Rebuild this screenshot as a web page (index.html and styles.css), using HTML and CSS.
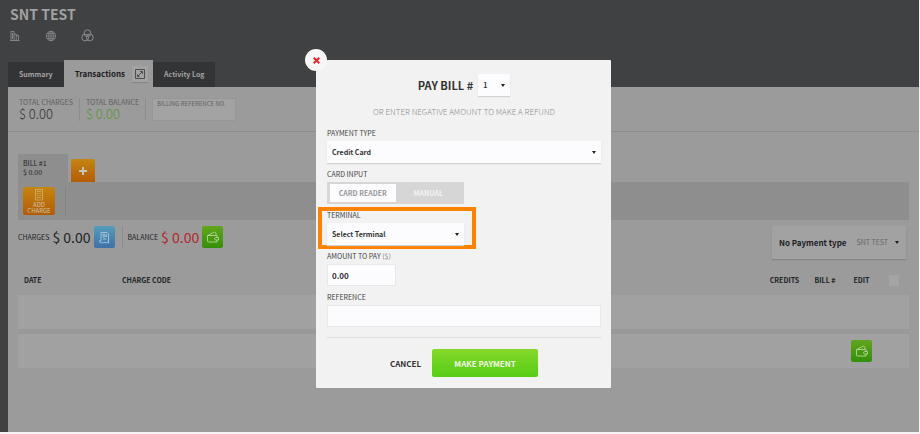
FILE: index.html
```html
<!DOCTYPE html>
<html lang="en">
<head>
    <meta charset="UTF-8">
    <meta name="viewport" content="width=device-width, initial-scale=1.0">
    <title>SNT TEST - Pay Bill</title>
    <link rel="stylesheet" href="styles.css">
</head>
<body>

<svg width="0" height="0" class="sprite">
    <symbol id="icon-wallet" viewBox="0 0 14 14">
        <path d="M1.500 5.500h9.500v2M11 10v2H2.500q-1 0-1-1V5.500L8.500 2l1.500 1.200v2.300M12.500 7.500H9.800a1.250 1.250 0 0 0 0 2.500h2.700z" fill="none" stroke="currentColor"/>
    </symbol>
</svg>

<div class="app">
    <header class="header">
        <h1>SNT TEST</h1>
        <nav class="header-icons">
            <a href="#" aria-label="Property">
                <svg width="11" height="12" viewBox="0 0 11 12" fill="none" stroke="currentColor" stroke-width=".9">
                    <path d="M0 10.500h9.500M1 10V1.500h3V10M4 4h2.200v6M6.200 5.500h2.300V10M2.500 3v6"/>
                </svg>
            </a>
            <a href="#" aria-label="Language">
                <svg width="12" height="12" viewBox="0 0 12 12" fill="none" stroke="currentColor" stroke-width=".8">
                    <circle cx="6" cy="6" r="4.700"/>
                    <ellipse cx="6" cy="6" rx="2.200" ry="4.700"/>
                    <path d="M6 1.300v9.400M1.300 6h9.400M2 3.600h8M2 8.400h8"/>
                </svg>
            </a>
            <a href="#" aria-label="Groups">
                <svg width="13" height="13" viewBox="0 0 13 13" fill="none" stroke="currentColor">
                    <circle cx="6.500" cy="4.200" r="3.400"/>
                    <circle cx="4.200" cy="8.500" r="3.400"/>
                    <circle cx="8.800" cy="8.500" r="3.400"/>
                </svg>
            </a>
        </nav>
    </header>

    <nav class="tabs">
        <a href="#" class="tab">Summary</a>
        <a href="#" class="tab active">Transactions
            <span class="expand">
                <svg width="10" height="10" viewBox="0 0 10 10" fill="none" stroke="currentColor">
                    <path d="M.5.500h9v9h-9zM2.500 7.500l5-5M5 2.500h2.500V5M2.500 5.500v2h2" stroke-width=".9"/>
                </svg>
            </span>
        </a>
        <a href="#" class="tab">Activity Log</a>
    </nav>

    <main class="panel">
        <section class="totals">
            <div class="total">
                <span class="total-label">TOTAL CHARGES</span>
                <span class="total-value">$ 0.00</span>
            </div>
            <div class="total green">
                <span class="total-label">TOTAL BALANCE</span>
                <span class="total-value">$ 0.00</span>
            </div>
            <input class="billing-ref" type="text" placeholder="BILLING REFERENCE NO." aria-label="Billing reference no.">
        </section>

        <section class="bills">
            <div class="bill-tabs">
                <a href="#" class="bill-tab">BILL #1<br>$ 0.00</a>
                <button class="add-bill" aria-label="Add bill">
                    <svg width="8" height="8" viewBox="0 0 8 8" stroke="currentColor" stroke-width="2"><path d="M4 0v8M0 4h8"/></svg>
                </button>
            </div>
            <div class="bill-bar">
                <button class="add-charge">
                    <svg width="10" height="12" viewBox="0 0 10 12" fill="none" stroke="currentColor" stroke-width=".8">
                        <path d="M1.500.500h7v10.500h-7zM3 2.500h4M3 4.500h1.500M5.500 4.500H7M3 6.500h1.500M5.500 6.500H7M3 8.500h4"/>
                    </svg>
                    <span>ADD<br>CHARGE</span>
                </button>
            </div>
            <div class="bill-summary">
                <div class="amount">
                    <span>CHARGES</span>
                    <strong>$ 0.00</strong>
                    <button class="square blue" aria-label="Show charges">
                        <svg width="13" height="13" viewBox="0 0 13 13" fill="none" stroke="currentColor" stroke-width=".9">
                            <path d="M3 9.500V1.500h6l1.500 1.500v9l-1.200-.8-1.200.8-1.200-.8-1.200.8-1.200-.8-1.200.8-1.500-1V9.500H3M5 3.500h2V6H5zM8.500 3.500V6M5 8h3.500"/>
                        </svg>
                    </button>
                </div>
                <div class="amount balance">
                    <span>BALANCE</span>
                    <strong>$ 0.00</strong>
                    <button class="square" aria-label="Pay balance">
                        <svg width="14" height="14"><use href="#icon-wallet"/></svg>
                    </button>
                </div>
                <button class="payment-type"><b>No Payment type</b> <span>SNT TEST</span><i class="caret"></i></button>
            </div>
        </section>

        <table class="charges">
            <thead>
                <tr>
                    <th class="col-date">DATE</th>
                    <th class="col-code">CHARGE CODE</th>
                    <th class="col-credits">CREDITS</th>
                    <th class="col-bill">BILL #</th>
                    <th class="col-edit">EDIT</th>
                    <th class="col-check"><input type="checkbox" aria-label="Select all"></th>
                </tr>
            </thead>
            <tbody>
                <tr><td></td><td></td><td></td><td></td><td></td><td></td></tr>
                <tr>
                    <td></td><td></td><td></td><td></td>
                    <td>
                        <button class="square" aria-label="Pay">
                            <svg width="14" height="14"><use href="#icon-wallet"/></svg>
                        </button>
                    </td>
                    <td></td>
                </tr>
            </tbody>
        </table>
    </main>
</div>

<div class="overlay">
    <form class="modal" role="dialog" aria-labelledby="pay-title">
        <button type="button" class="close" aria-label="Close">
            <svg width="7" height="7" viewBox="0 0 7 7" stroke="currentColor" stroke-width="2"><path d="M.7.700l5.600 5.600M6.300.700.700 6.300"/></svg>
        </button>

        <div class="modal-title">
            <label id="pay-title" for="bill-number">PAY BILL #</label>
            <span class="select">
                <select id="bill-number"><option>1</option></select>
            </span>
        </div>
        <p class="hint">OR ENTER NEGATIVE AMOUNT TO MAKE A REFUND</p>

        <div class="field">
            <label for="payment-type">PAYMENT TYPE</label>
            <span class="select">
                <select id="payment-type"><option>Credit Card</option></select>
            </span>
        </div>
        <div class="field half">
            <span class="label">CARD INPUT</span>
            <div class="toggle">
                <button type="button" class="on">CARD READER</button>
                <button type="button">MANUAL</button>
            </div>
        </div>
        <div class="field half highlight">
            <label for="terminal">TERMINAL</label>
            <span class="select">
                <select id="terminal"><option>Select Terminal</option></select>
            </span>
        </div>
        <div class="field quarter">
            <label for="amount">AMOUNT TO PAY <span>($)</span></label>
            <input type="text" id="amount" value="0.00">
        </div>
        <div class="field">
            <label for="reference">REFERENCE</label>
            <input type="text" id="reference">
        </div>

        <div class="actions">
            <button type="button" class="cancel">CANCEL</button>
            <button type="submit" class="pay">MAKE PAYMENT</button>
        </div>
    </form>
</div>

</body>
</html>
```
FILE: styles.css
```css
* {
    box-sizing: border-box;
}
body {
    margin: 0;
    background: #f4f4f4;
    font-family: "Noto Sans CJK SC", "Open Sans", sans-serif;
    font-size: 7px;
    line-height: 11px;
    color: #222325;
}
button, input, select {
    font: inherit;
    color: inherit;
    border: 0;
    border-radius: 0;
    margin: 0;
    padding: 0;
}
a {
    color: inherit;
    text-decoration: none;
}
svg {
    display: block;
}
.sprite {
    position: absolute;
}

/* page */
.app {
    display: flex;
    flex-direction: column;
    min-height: calc(100vh - 2px);
    margin: 0 1px 2px 0;
    padding-left: 8px;
    background: #404143;
}
.header {
    height: 60px;
    padding: 4px 2px;
    color: #a1a1a1;
}
h1 {
    margin: 0 0 5px;
    font-size: 14px;
    line-height: 20px;
    font-weight: 700;
}
.header-icons {
    display: flex;
    align-items: center;
    gap: 24px;
    color: #8c8c8c;
}
.tabs {
    display: flex;
    align-items: flex-end;
    font-size: 7px;
    font-weight: 700;
}
.tab {
    display: flex;
    align-items: center;
    height: 25px;
    padding: 0 11px;
    background: #333436;
    color: #a3a3a3;
}
.tab.active {
    height: 27px;
    padding-right: 5px;
    gap: 7px;
    background: #9b9b9b;
    color: #1c1d1f;
    font-size: 8px;
}
.expand {
    padding: 3px;
    background: #a2a2a2;
    color: #444;
    box-shadow: 0 1px 1px #888;
}
.panel {
    flex: 1;
    background: #9b9b9b;
}

.totals {
    display: flex;
    align-items: center;
    height: 45px;
    padding: 0 11px;
    border-bottom: 1px solid #8d8d8d;
}
.total {
    height: 23px;
    margin-right: 6px;
    padding-right: 6px;
    border-right: 1px solid #8d8d8d;
}
.total-label {
    display: block;
    line-height: 8px;
    color: #606060;
}
.total-value {
    display: block;
    font-size: 13px;
    line-height: 15px;
    font-weight: 300;
    color: #303133;
}
.green .total-value {
    color: #5a9430;
}
.billing-ref {
    width: 84px;
    height: 23px;
    padding: 0 4px 12px;
    background: #a3a3a3;
    border: 1px solid #969696;
    font-size: 6px;
}
.billing-ref::placeholder {
    color: #636363;
}

.bills {
    padding: 22px 10px 0;
}
.bill-tabs {
    display: flex;
    align-items: flex-end;
    gap: 3px;
}
.bill-tab {
    width: 50px;
    height: 28px;
    padding: 5px;
    background: #8e8e8e;
    line-height: 9px;
}
.add-bill {
    display: grid;
    place-items: center;
    width: 24px;
    height: 23px;
    border-radius: 2px 2px 0 0;
    background: linear-gradient(#c5850f, #b25c07);
    color: #c4c4c4;
}
.bill-bar {
    display: flex;
    align-items: center;
    height: 38px;
    padding: 0 5px;
    background: #8e8e8e;
}
.bill-bar::after {
    content: "";
    height: 28px;
    margin-left: 10px;
    border-left: 1px solid #828282;
}
.add-charge {
    display: flex;
    flex-direction: column;
    align-items: center;
    justify-content: space-between;
    width: 32px;
    height: 28px;
    padding: 2px 0 1px;
    border-radius: 2px;
    background: linear-gradient(#c5850f, #b25c07);
    color: #d0c4b0;
    font-size: 6px;
    line-height: 6px;
}
.add-charge svg {
    color: #cdb478;
}
.bill-summary {
    display: flex;
    align-items: flex-start;
    padding-top: 6px;
}
.amount {
    display: flex;
    align-items: center;
    gap: 3px;
    height: 22px;
    padding-right: 7px;
}
.amount strong {
    font-size: 14px;
    font-weight: 400;
    line-height: 22px;
}
.balance {
    padding-left: 5px;
    border-left: 1px solid #8b8b8b;
}
.balance strong {
    color: #b0282c;
}
.square {
    display: grid;
    place-items: center;
    width: 21px;
    height: 22px;
    margin: 0 auto;
    border-radius: 2px;
    background: linear-gradient(#61a61c, #329008);
    color: #a9d08c;
}
.square.blue {
    background: linear-gradient(#579cbb, #3f70a8);
    color: #a9cbdd;
}
.payment-type {
    display: flex;
    align-items: center;
    height: 33px;
    margin: 0 3px 0 auto;
    padding: 0 7px;
    background: #a2a2a2;
    box-shadow: 0 1px 1px #858585;
    color: #666;
}
.payment-type b {
    margin-right: 10px;
    font-size: 8px;
    font-weight: 700;
    color: #1c1d1f;
}
.caret {
    margin-left: 7px;
    border: 2px solid transparent;
    border-top: 3px solid #1c1d1f;
    border-bottom: 0;
}

.charges {
    width: calc(100% - 20px);
    margin: 6px 10px 0;
    table-layout: fixed;
    border-spacing: 0;
}
.charges th {
    height: 30px;
    padding: 0;
    font-weight: 700;
}
.charges td {
    height: 39px;
    padding: 0;
    background: #a1a1a1;
    border-bottom: 5px solid #999;
}
.charges tr:last-child td {
    border-bottom-color: #9b9b9b;
}
.charges .col-date {
    width: 104px;
    padding-left: 6px;
    text-align: left;
}
.charges .col-code {
    text-align: left;
}
.col-credits {
    width: 43px;
}
.col-bill {
    width: 38px;
}
.col-edit {
    width: 35px;
}
.col-check {
    width: 30px;
}
.col-check input {
    display: block;
    appearance: none;
    width: 10px;
    height: 11px;
    margin: 0 auto;
    background: #a4a4a4;
}

/* pay bill dialog */
.overlay {
    position: fixed;
    inset: 0;
    display: flex;
    justify-content: center;
    align-items: flex-start;
    padding: 60px 0 0 7px;
}
.modal {
    position: relative;
    width: 295px;
    padding: 14px 10px 11px 11px;
    background: #f2f2f2;
    color: #333;
    border-radius: 1px;
}
.close {
    position: absolute;
    top: -11px;
    left: -11px;
    display: grid;
    place-items: center;
    width: 22px;
    height: 22px;
    border-radius: 50%;
    background: #f7f7f7;
    color: #e8262c;
}
.modal-title {
    display: flex;
    justify-content: center;
    align-items: center;
    gap: 5px;
    font-size: 11px;
    font-weight: 700;
}
.modal-title .select {
    width: 32px;
}
.hint {
    margin: 10px 0 11px;
    text-align: center;
    font-size: 8px;
    font-weight: 300;
    color: #8e8e8e;
}
.field {
    position: relative;
    margin-bottom: 6px;
}
.half {
    width: 137px;
}
.quarter {
    width: 69px;
}
.field label, .label {
    display: block;
    padding-bottom: 2px;
    color: #444;
}
.field label span {
    color: #888;
}
.select {
    display: block;
    position: relative;
}
.select::after {
    content: "";
    position: absolute;
    top: 10px;
    right: 5px;
    border: 2px solid transparent;
    border-top: 3px solid #222;
    border-bottom: 0;
}
.select select {
    display: block;
    appearance: none;
    width: 100%;
    height: 22px;
    padding: 0 5px;
    background: #fcfbfe;
    box-shadow: 0 1px 1px #d2d2d2;
    font-size: 7px;
    font-weight: 700;
}
.field input {
    display: block;
    width: 100%;
    height: 22px;
    padding: 0 4px;
    background: #fcfbfe;
    border: 1px solid #e8e8e8;
    font-size: 8px;
    font-weight: 700;
}
.toggle {
    display: grid;
    grid-template-columns: 1fr 1fr;
    height: 22px;
    padding: 2px 3px;
    background: #d6d6d6;
}
.toggle button {
    background: none;
    color: #f3f3f3;
    font-weight: 700;
}
.toggle .on {
    background: #fcfbfe;
    color: #999;
}
.highlight::before {
    content: "";
    position: absolute;
    inset: -3px -12px -4px -9px;
    border: 4px solid #ff8200;
}
.actions {
    display: flex;
    justify-content: center;
    align-items: center;
    gap: 11px;
    margin-top: 10px;
    padding-top: 11px;
    border-top: 1px solid #dedede;
    font-size: 8px;
    font-weight: 700;
}
.cancel {
    background: none;
}
.pay {
    width: 106px;
    height: 28px;
    border-radius: 2px;
    background: linear-gradient(#86d92b, #56cd15);
    color: #f0fbe6;
}
```
